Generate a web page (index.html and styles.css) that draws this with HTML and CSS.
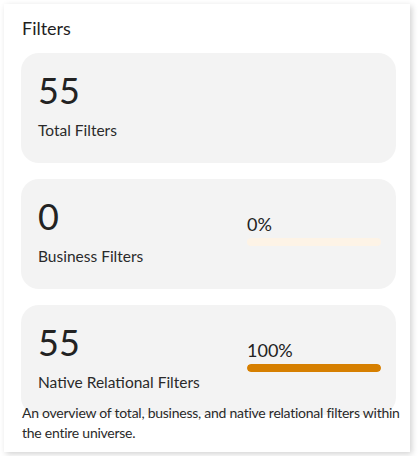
FILE: index.html
```html
<!DOCTYPE html>
<html>
<head>
<meta charset="utf-8">
<link rel="stylesheet" href="styles.css">
</head>
<body>
<section class="panel">
  <h2 class="title">Filters</h2>
  <div class="stats">
    <div class="stat">
      <div class="stat-main">
        <div class="stat-value">55</div>
        <div class="stat-label">Total Filters</div>
      </div>
    </div>
    <div class="stat">
      <div class="stat-main">
        <div class="stat-value">0</div>
        <div class="stat-label">Business Filters</div>
      </div>
      <div class="stat-side">
        <div class="pct">0%</div>
        <div class="bar"><div class="bar-fill" style="width:0%"></div></div>
      </div>
    </div>
    <div class="stat">
      <div class="stat-main">
        <div class="stat-value">55</div>
        <div class="stat-label">Native Relational Filters</div>
      </div>
      <div class="stat-side">
        <div class="pct">100%</div>
        <div class="bar"><div class="bar-fill" style="width:100%"></div></div>
      </div>
    </div>
  </div>
  <p class="desc">An overview of total, business, and native relational filters within the entire universe.</p>
</section>
</body>
</html>
```
FILE: styles.css
```css
html, body {
  margin: 0;
  padding: 0;
  background: #ffffff;
}
body {
  font-family: "Lato", "Open Sans", sans-serif;
  color: #222222;
}
.panel {
  box-sizing: border-box;
  margin: 4px;
  width: 406px;
  height: 448px;
  padding: 12px 14px 10px 17px;
  background: #ffffff;
  box-shadow: 2px 2px 6px rgba(0, 0, 0, 0.18);
}
.title {
  margin: 0 0 13px 1px;
  font-size: 18px;
  line-height: 24px;
  font-weight: 400;
  color: #1f1f1f;
}
.stats {
  display: flex;
  flex-direction: column;
  gap: 16px;
}
.stat {
  box-sizing: border-box;
  height: 110px;
  padding: 15px 15px 0 17px;
  background: #f3f3f3;
  border-radius: 18px;
  display: flex;
  align-items: flex-start;
}
.stat-main {
  flex: 1;
}
.stat-value {
  font-size: 36px;
  line-height: 44px;
  color: #222222;
}
.stat-label {
  margin-top: 8px;
  font-size: 15.5px;
  line-height: 20px;
  color: #2a2a2a;
}
.stat-side {
  width: 134px;
  margin-top: 18px;
}
.pct {
  font-size: 18px;
  line-height: 24px;
  color: #222222;
}
.bar {
  margin-top: 2px;
  height: 8px;
  border-radius: 4px;
  background: #fdf3e6;
  overflow: hidden;
}
.bar-fill {
  height: 100%;
  background: #d67f00;
  border-radius: 4px;
}
.desc {
  margin: -12px -4px 0 1px;
  position: relative;
  font-size: 14px;
  letter-spacing: -0.25px;
  line-height: 20px;
  color: #2a2a2a;
}
```
